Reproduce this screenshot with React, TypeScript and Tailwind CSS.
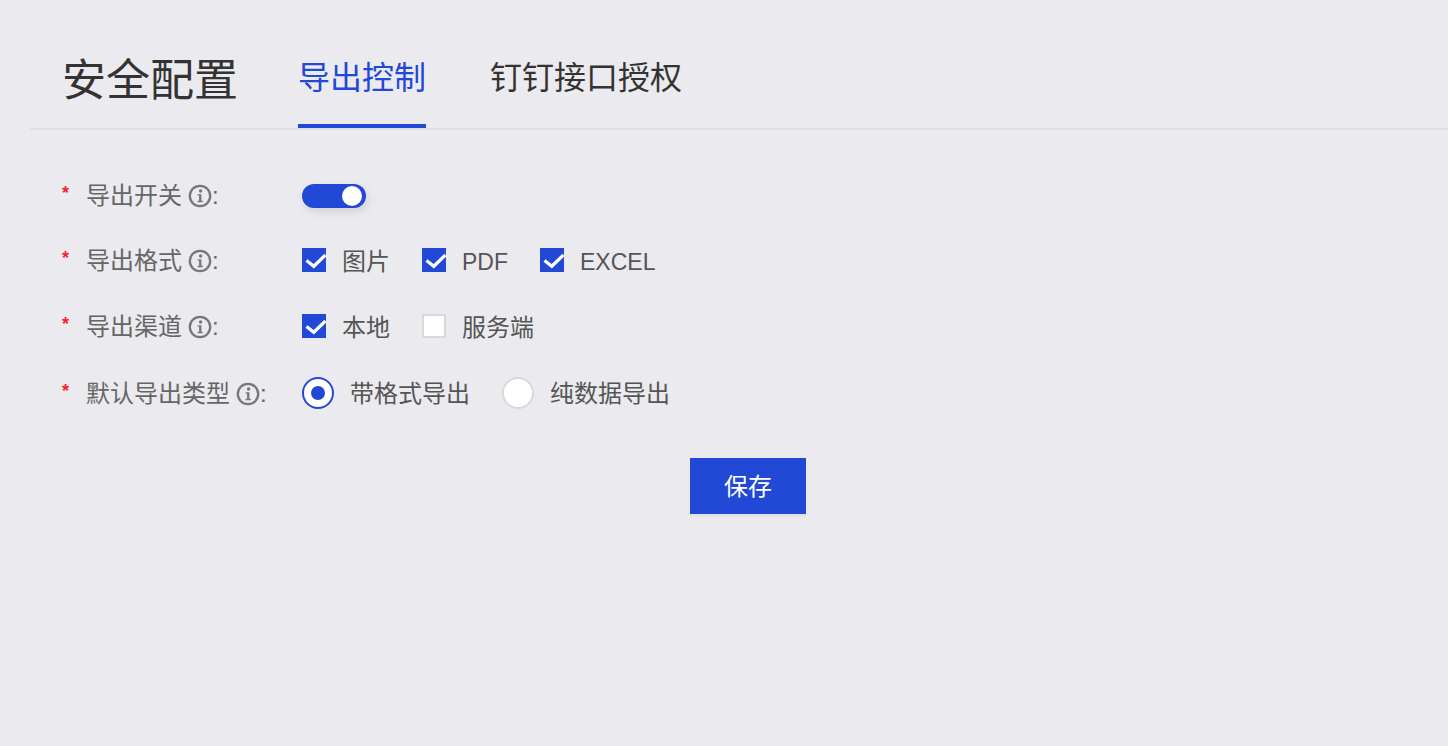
const font = { fontFamily: '"Liberation Sans", "Noto Sans CJK SC", sans-serif' };

function Info() {
  return (
    <svg width="24" height="24" viewBox="0 0 24 24" className="shrink-0">
      <circle cx="12" cy="12" r="10.2" fill="none" stroke="#777" strokeWidth="2.3" />
      <circle cx="12.6" cy="7" r="1.7" fill="#777" />
      <path d="M9.6 10.2h3.8v6.6h1.4v1.4H9.6v-1.4h1.5v-5.2H9.6z" fill="#777" />
    </svg>
  );
}

function Label({ text }: { text: string }) {
  return (
    <div className="flex items-center w-[240px] shrink-0 text-[24px] leading-[32px] text-[#666]">
      <span className="w-[24px] shrink-0 text-[#f5222d] text-[18px] font-bold leading-[20px] -mt-[7px]">*</span>
      <span>{text}</span>
      <span className="ml-[6px]"><Info /></span>
      <span>:</span>
    </div>
  );
}

function Check({ on, text, latin }: { on: boolean; text: string; latin?: boolean }) {
  return (
    <div className="flex items-center">
      {on ? (
        <span className="w-[24px] h-[24px] mb-[2px] bg-[#2248d6] flex items-center justify-center">
          <svg width="24" height="24" viewBox="0 0 24 24">
            <path d="M4.5 12.5l7.3 5.8L23.5 7" fill="none" stroke="#fff" strokeWidth="3.3" />
          </svg>
        </span>
      ) : (
        <span className="w-[24px] h-[24px] mb-[2px] bg-white border-2 border-[#d9d9d9]" />
      )}
      <span className={`ml-[16px] mt-[2px] leading-[32px] text-[#555] ${latin ? "text-[23px]" : "text-[24px]"}`}>{text}</span>
    </div>
  );
}

function Radio({ on, text }: { on: boolean; text: string }) {
  return (
    <div className="flex items-center">
      {on ? (
        <span className="w-[32px] h-[32px] mb-[3px] rounded-full bg-white border-2 border-[#2248d6] flex items-center justify-center">
          <span className="w-[14px] h-[14px] rounded-full bg-[#2248d6]" />
        </span>
      ) : (
        <span className="w-[32px] h-[32px] mb-[3px] rounded-full bg-white border-2 border-[#d9d9d9]" />
      )}
      <span className="ml-[16px] text-[24px] leading-[32px] text-[#555]">{text}</span>
    </div>
  );
}

export default function App() {
  return (
    <div style={font} className="w-[1448px] h-[746px] bg-[#eaeaef] overflow-hidden pt-[31px] pl-[30px]">
      <div className="flex items-end h-[99px] border-b-2 border-[#e0e0e6] pl-[32px]">
        <div className="text-[44px] leading-[60px] text-[#333] mb-[17px] w-[236px] shrink-0">安全配置</div>
        <div className="h-[97px] w-[128px] shrink-0 border-b-4 border-[#2248d6] text-[32px] leading-[44px] pt-[25px] text-[#2248d6]">导出控制</div>
        <div className="h-[97px] ml-[64px] text-[32px] leading-[44px] pt-[25px] text-[#333]">钉钉接口授权</div>
      </div>

      <div className="pl-[32px] pt-[50px]">
        <div className="flex items-center h-[32px]">
          <Label text="导出开关" />
          <span className="w-[64px] h-[24px] rounded-full bg-[#2248d6] flex items-center justify-end pr-[4px] shadow-[2px_4px_8px_rgba(0,0,0,0.1)]">
            <span className="w-[20px] h-[20px] rounded-full bg-white" />
          </span>
        </div>
        <div className="flex items-center h-[32px] mt-[33px]">
          <Label text="导出格式" />
          <div className="flex gap-[32px]">
            <Check on text="图片" />
            <Check on latin text="PDF" />
            <Check on latin text="EXCEL" />
          </div>
        </div>
        <div className="flex items-center h-[32px] mt-[34px]">
          <Label text="导出渠道" />
          <div className="flex gap-[32px]">
            <Check on text="本地" />
            <Check on={false} text="服务端" />
          </div>
        </div>
        <div className="flex items-center h-[32px] mt-[35px]">
          <Label text="默认导出类型" />
          <div className="flex gap-[32px]">
            <Radio on text="带格式导出" />
            <Radio on={false} text="纯数据导出" />
          </div>
        </div>
      </div>

      <div className="ml-[660px] mt-[48px] w-[116px] h-[56px] pt-[2px] bg-[#2248d6] flex items-center justify-center text-white text-[24px] shadow-[0_3px_0_#e3e3e8]">
        保存
      </div>
    </div>
  );
}
